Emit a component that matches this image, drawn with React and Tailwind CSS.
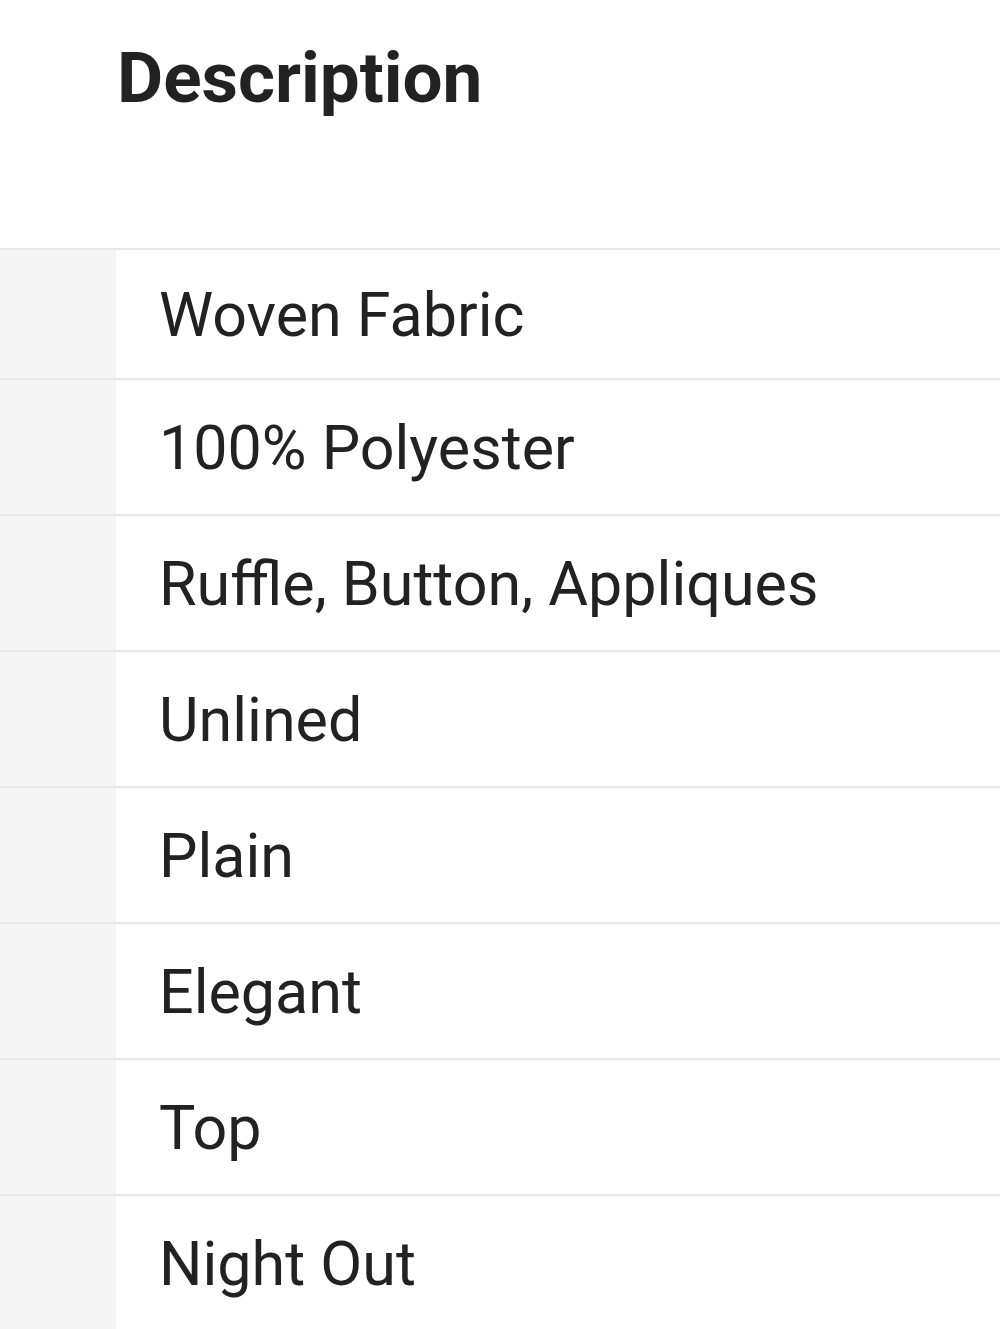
export default function App() {
  const rows = [
    "Woven Fabric",
    "100% Polyester",
    "Ruffle, Button, Appliques",
    "Unlined",
    "Plain",
    "Elegant",
    "Top",
    "Night Out",
  ];
  return (
    <div className="w-[1000px] h-[1329px] overflow-hidden bg-white" style={{ fontFamily: "Roboto, sans-serif" }}>
      <div className="h-[248px] pl-[117px] pt-[34px]">
        <h2 className="text-[71px] leading-[88px] font-bold text-[#222222]">Description</h2>
      </div>
      <div className="border-t-2 border-[#e8e8e8]">
        {rows.map((r, i) => (
          <div key={i} className={`flex border-b-2 border-[#e8e8e8] ${i === 0 ? "h-[130px]" : "h-[136px]"}`}>
            <div className="w-[116px] shrink-0 bg-[#f5f5f5]" />
            <div className="flex-1 flex items-center pl-[43px] pt-[3px] text-[61px] text-[#222222]">{r}</div>
          </div>
        ))}
      </div>
    </div>
  );
}
